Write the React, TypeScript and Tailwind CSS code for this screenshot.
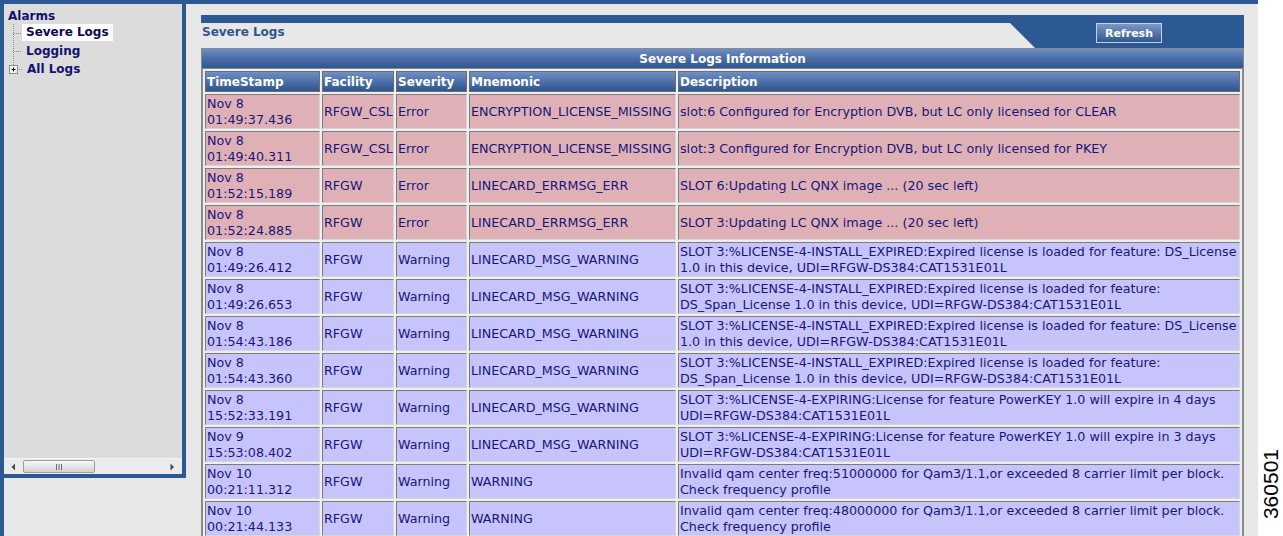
import React from 'react'

interface LogRow {
  date: string
  time: string
  facility: string
  severity: 'Error' | 'Warning'
  mnemonic: string
  description: string[]
}

const expiredA = [
  'SLOT 3:%LICENSE-4-INSTALL_EXPIRED:Expired license is loaded for feature: DS_License',
  '1.0 in this device, UDI=RFGW-DS384:CAT1531E01L',
]
const expiredB = [
  'SLOT 3:%LICENSE-4-INSTALL_EXPIRED:Expired license is loaded for feature:',
  'DS_Span_License 1.0 in this device, UDI=RFGW-DS384:CAT1531E01L',
]

const logs: LogRow[] = [
  { date: 'Nov 8', time: '01:49:37.436', facility: 'RFGW_CSL', severity: 'Error', mnemonic: 'ENCRYPTION_LICENSE_MISSING', description: ['slot:6 Configured for Encryption DVB, but LC only licensed for CLEAR'] },
  { date: 'Nov 8', time: '01:49:40.311', facility: 'RFGW_CSL', severity: 'Error', mnemonic: 'ENCRYPTION_LICENSE_MISSING', description: ['slot:3 Configured for Encryption DVB, but LC only licensed for PKEY'] },
  { date: 'Nov 8', time: '01:52:15.189', facility: 'RFGW', severity: 'Error', mnemonic: 'LINECARD_ERRMSG_ERR', description: ['SLOT 6:Updating LC QNX image ... (20 sec left)'] },
  { date: 'Nov 8', time: '01:52:24.885', facility: 'RFGW', severity: 'Error', mnemonic: 'LINECARD_ERRMSG_ERR', description: ['SLOT 3:Updating LC QNX image ... (20 sec left)'] },
  { date: 'Nov 8', time: '01:49:26.412', facility: 'RFGW', severity: 'Warning', mnemonic: 'LINECARD_MSG_WARNING', description: expiredA },
  { date: 'Nov 8', time: '01:49:26.653', facility: 'RFGW', severity: 'Warning', mnemonic: 'LINECARD_MSG_WARNING', description: expiredB },
  { date: 'Nov 8', time: '01:54:43.186', facility: 'RFGW', severity: 'Warning', mnemonic: 'LINECARD_MSG_WARNING', description: expiredA },
  { date: 'Nov 8', time: '01:54:43.360', facility: 'RFGW', severity: 'Warning', mnemonic: 'LINECARD_MSG_WARNING', description: expiredB },
  { date: 'Nov 8', time: '15:52:33.191', facility: 'RFGW', severity: 'Warning', mnemonic: 'LINECARD_MSG_WARNING', description: ['SLOT 3:%LICENSE-4-EXPIRING:License for feature PowerKEY 1.0 will expire in 4 days', 'UDI=RFGW-DS384:CAT1531E01L'] },
  { date: 'Nov 9', time: '15:53:08.402', facility: 'RFGW', severity: 'Warning', mnemonic: 'LINECARD_MSG_WARNING', description: ['SLOT 3:%LICENSE-4-EXPIRING:License for feature PowerKEY 1.0 will expire in 3 days', 'UDI=RFGW-DS384:CAT1531E01L'] },
  { date: 'Nov 10', time: '00:21:11.312', facility: 'RFGW', severity: 'Warning', mnemonic: 'WARNING', description: ['Invalid qam center freq:51000000 for Qam3/1.1,or exceeded 8 carrier limit per block.', 'Check frequency profile'] },
  { date: 'Nov 10', time: '00:21:44.133', facility: 'RFGW', severity: 'Warning', mnemonic: 'WARNING', description: ['Invalid qam center freq:48000000 for Qam3/1.1,or exceeded 8 carrier limit per block.', 'Check frequency profile'] },
]

const headers = [
  { label: 'TimeStamp', w: 'w-[115px]' },
  { label: 'Facility', w: 'w-[72px]' },
  { label: 'Severity', w: 'w-[71px]' },
  { label: 'Mnemonic', w: 'w-[207px]' },
  { label: 'Description', w: '' },
]

// tree connector: dotted branch, optional expand box
function Branch({ last = false, box = false }: { last?: boolean; box?: boolean }) {
  return (
    <svg width="14" height="18" viewBox="0 0 14 18" className="shrink-0">
      <line x1="5.5" y1="0" x2="5.5" y2={last ? 9 : 18} stroke="#8a8a8a" strokeDasharray="1 1" />
      <line x1={box ? 9 : 6} y1="9.5" x2="14" y2="9.5" stroke="#8a8a8a" strokeDasharray="1 1" />
      {box && (
        <>
          <rect x="1.5" y="5.5" width="8" height="8" fill="#f4f4f4" stroke="#8c8c8c" />
          <line x1="3.5" y1="9.5" x2="7.5" y2="9.5" stroke="#000" />
          <line x1="5.5" y1="7.5" x2="5.5" y2="11.5" stroke="#000" />
        </>
      )}
    </svg>
  )
}

function Tree() {
  return (
    <div className="flex-1 pt-[4px] pl-[4px] text-[12px] leading-[17px] font-bold text-[#12126e]">
      <div className="h-[16px] leading-[16px]">Alarms</div>
      <div className="flex h-[18px] items-start">
        <Branch />
        <span className="bg-white px-[4px] leading-[17px] text-[#0a0a50]">Severe Logs</span>
      </div>
      <div className="flex h-[18px] items-center">
        <Branch />
        <span className="pl-[4px] leading-[17px]">Logging</span>
      </div>
      <div className="flex h-[18px] items-center">
        <Branch last box />
        <span className="pl-[5px] leading-[17px]">All Logs</span>
      </div>
    </div>
  )
}

function HScrollbar() {
  return (
    <div className="flex h-[16px] shrink-0 items-center border-t border-[#f4f4f4] bg-[#ebebeb] px-[5px]">
      <svg width="6" height="8" viewBox="0 0 6 8" className="ml-[2px]">
        <path d="M4 0.5 L0.5 4 L4 7.5 Z" fill="#4a4a4a" />
      </svg>
      <div className="ml-[6px] flex h-[13px] w-[72px] items-center justify-center rounded-[2px] border border-[#9c9c9c] bg-linear-to-b from-[#f7f7f7] via-[#e6e6e6] to-[#d2d2d2]">
        <svg width="8" height="6" viewBox="0 0 8 6">
          <path d="M1.5 0 V6 M4 0 V6 M6.5 0 V6" stroke="#6a6a6a" strokeWidth="1" />
        </svg>
      </div>
      <div className="flex-1" />
      <svg width="6" height="8" viewBox="0 0 6 8" className="mr-[2px]">
        <path d="M1.5 0.5 L5 4 L1.5 7.5 Z" fill="#4a4a4a" />
      </svg>
    </div>
  )
}

export default function App() {
  return (
    <div className="flex h-[536px] w-[1283px] overflow-hidden bg-white font-['DejaVu_Sans','Verdana',sans-serif]">
      <div className="flex w-[1258px] shrink-0 flex-col">
        <div className="h-[4px] shrink-0 bg-[#2c5893]" />
        <div className="flex min-h-0 flex-1">
          {/* left navigation frame */}
          <div className="w-[186px] shrink-0 border-l-[4px] border-[#2c5893] bg-[#e8e8e8]">
            <div className="flex h-[474px] flex-col border-r-[4px] border-b-[4px] border-[#2c5893] bg-[#dcdcdc]">
              <Tree />
              <HScrollbar />
            </div>
          </div>

          {/* main content */}
          <div className="min-w-0 flex-1 overflow-hidden bg-[#e8e8e8] pt-[11px] pr-[14px] pl-[15px]">
            <div className="flex h-[33px] items-end bg-[#2c5893]">
              <div className="h-[25px] w-[834px] bg-[#e8e8e8] pt-px pl-[1px] text-[12px] leading-[17px] font-bold text-[#30568c] [clip-path:polygon(0_0,809px_0,100%_100%,0_100%)]">
                Severe Logs
              </div>
              <button className="mb-[5px] ml-[61px] h-[20px] w-[66px] border border-[#c9d0dc] bg-linear-to-b from-[#7b98c6] to-[#2f5891] text-[11px] leading-[17px] font-bold text-white">
                Refresh
              </button>
            </div>

            <div className="border border-[#8a8a8a] bg-[#eeeeee]">
              <div className="h-[19px] bg-linear-to-b from-[#6f8fc3] via-[#4a6ea8] to-[#2c5690] text-center text-[12px] leading-[21px] font-bold text-white">
                Severe Logs Information
              </div>
              <table className="w-full table-fixed border-separate border-spacing-[2px] border border-[#8a8a8a] text-[12.7px] text-[#16167a]">
                <thead>
                  <tr>
                    {headers.map(h => (
                      <th
                        key={h.label}
                        className={`${h.w} h-[21px] border border-[#6d6d6d] bg-linear-to-b from-[#7090c4] via-[#4d71aa] to-[#2d5690] pt-px pl-[1px] text-left text-[12px] leading-[17px] font-bold text-white`}
                      >
                        {h.label}
                      </th>
                    ))}
                  </tr>
                </thead>
                <tbody>
                  {logs.map((row, i) => {
                    const bg = row.severity === 'Error' ? 'bg-[#dfb1b6]' : 'bg-[#c7c4fb]'
                    const cell = `${bg} h-[35px] border border-t-[#7c7c7c] border-l-[#7c7c7c] border-r-[#d6d6d6] border-b-[#d6d6d6] pl-px leading-[16px] whitespace-nowrap overflow-hidden`
                    return (
                      <tr key={i}>
                        <td className={cell}>
                          {row.date}
                          <br />
                          {row.time}
                        </td>
                        <td className={cell}>{row.facility}</td>
                        <td className={cell}>{row.severity}</td>
                        <td className={cell}>{row.mnemonic}</td>
                        <td className={cell}>
                          {row.description.map((line, j) => (
                            <React.Fragment key={j}>
                              {j > 0 && <br />}
                              {line}
                            </React.Fragment>
                          ))}
                        </td>
                      </tr>
                    )
                  })}
                </tbody>
              </table>
            </div>
          </div>
        </div>
      </div>

      {/* figure number */}
      <div className="flex flex-1 flex-col justify-end pb-[17px]">
        <div className="rotate-180 pr-[2px] font-['Liberation_Sans',Arial,sans-serif] text-[21px] leading-[21px] text-black [writing-mode:vertical-rl]">
          360501
        </div>
      </div>
    </div>
  )
}
